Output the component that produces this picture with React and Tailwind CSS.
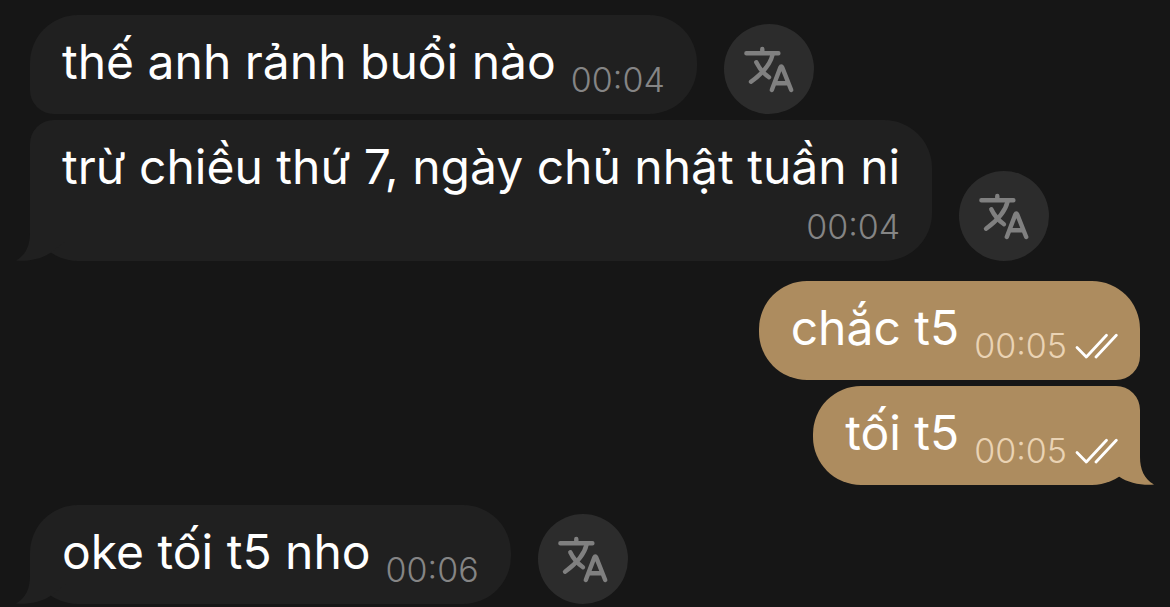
import clsx from 'clsx';

const groups = [
  {
    own: false,
    messages: [
      { id: 1, text: 'thế anh rảnh buổi nào', time: '00:04' },
      { id: 2, text: 'trừ chiều thứ 7, ngày chủ nhật tuần ni', time: '00:04', long: true },
    ],
  },
  {
    own: true,
    messages: [
      { id: 3, text: 'chắc t5', time: '00:05' },
      { id: 4, text: 'tối t5', time: '00:05' },
    ],
  },
  {
    own: false,
    messages: [{ id: 5, text: 'oke tối t5 nho', time: '00:06' }],
  },
];

function TranslateIcon() {
  return (
    <svg
      viewBox="0 0 90 90"
      className="size-full"
      fill="none"
      stroke="currentColor"
      strokeWidth="4.4"
      strokeLinecap="round"
      strokeLinejoin="round"
      aria-hidden="true"
    >
      <path d="M22.4 29.3H54.4M38.3 25V29" />
      <path d="M48.6 30.5C46.5 40 39 49 27 57.8" />
      <path d="M32.3 38.3C35 44 39.5 49.5 45 53.3" />
      <path d="M47.8 66L56.4 43.4Q57.3 41.4 58.2 43.4L67.2 66M51.2 59.3H63.8" />
    </svg>
  );
}

function DoubleCheck() {
  return (
    <svg
      viewBox="0 0 43 26"
      className="h-[26px] w-[43px]"
      fill="none"
      stroke="currentColor"
      strokeWidth="2.8"
      strokeLinecap="round"
      strokeLinejoin="round"
      aria-label="Đã xem"
    >
      <path d="M2 14.6L11.3 24L31.5 2.2" />
      <path d="M21 24L41.3 2.2" />
    </svg>
  );
}

function Tail({ own }) {
  return (
    <svg
      viewBox="0 0 50 50"
      className={clsx(
        'absolute bottom-0 size-[50px]',
        own ? '-right-[14px] -scale-x-100 text-[#ad8c5f]' : '-left-[14px] text-[#202020]'
      )}
      fill="currentColor"
      aria-hidden="true"
    >
      <path d="M14 0V22C14 34 10 44 0 49.6C12 50.6 26 48 35 41.5L50 30V0Z" />
    </svg>
  );
}

function Message({ message, own, first, last }) {
  return (
    <div className={clsx('flex items-end gap-[27px]', own && 'justify-end')}>
      <div
        className={clsx(
          'relative flex rounded-[48px] pt-2 pl-8',
          own ? 'bg-[#ad8c5f] pr-[22px]' : 'bg-[#202020] pr-8',
          message.long
            ? 'min-h-[141px] flex-col items-end justify-between'
            : 'min-h-[99px] items-end gap-[15px]',
          !own && !first && 'rounded-tl-[24px]',
          !own && !last && 'rounded-bl-[24px]',
          own && !first && 'rounded-tr-[24px]',
          own && !last && 'rounded-br-[24px]'
        )}
      >
        {last && <Tail own={own} />}
        <p className="relative self-start text-[48px] leading-[78px] whitespace-nowrap text-white">
          {message.text}
        </p>
        <div
          className={clsx(
            'relative mb-4 flex items-center gap-2 text-[34px] leading-[36px] font-light',
            own ? 'text-[#ead3b4]' : 'text-[#858585]'
          )}
        >
          <time>{message.time}</time>
          {own && (
            <span className="text-white">
              <DoubleCheck />
            </span>
          )}
        </div>
      </div>
      {!own && (
        <button
          type="button"
          aria-label="Dịch tin nhắn"
          className="size-[90px] shrink-0 rounded-full bg-[#2c2c2c] text-[#808080]"
        >
          <TranslateIcon />
        </button>
      )}
    </div>
  );
}

export default function App() {
  return (
    <main className="flex min-h-screen flex-col gap-5 bg-[#161616] px-[30px] pt-[15px] font-['Inter','Liberation_Sans',sans-serif]">
      {groups.map((group, index) => (
        <section key={index} className="flex flex-col gap-[6px]">
          {group.messages.map((message, i) => (
            <Message
              key={message.id}
              message={message}
              own={group.own}
              first={i === 0}
              last={i === group.messages.length - 1}
            />
          ))}
        </section>
      ))}
    </main>
  );
}
